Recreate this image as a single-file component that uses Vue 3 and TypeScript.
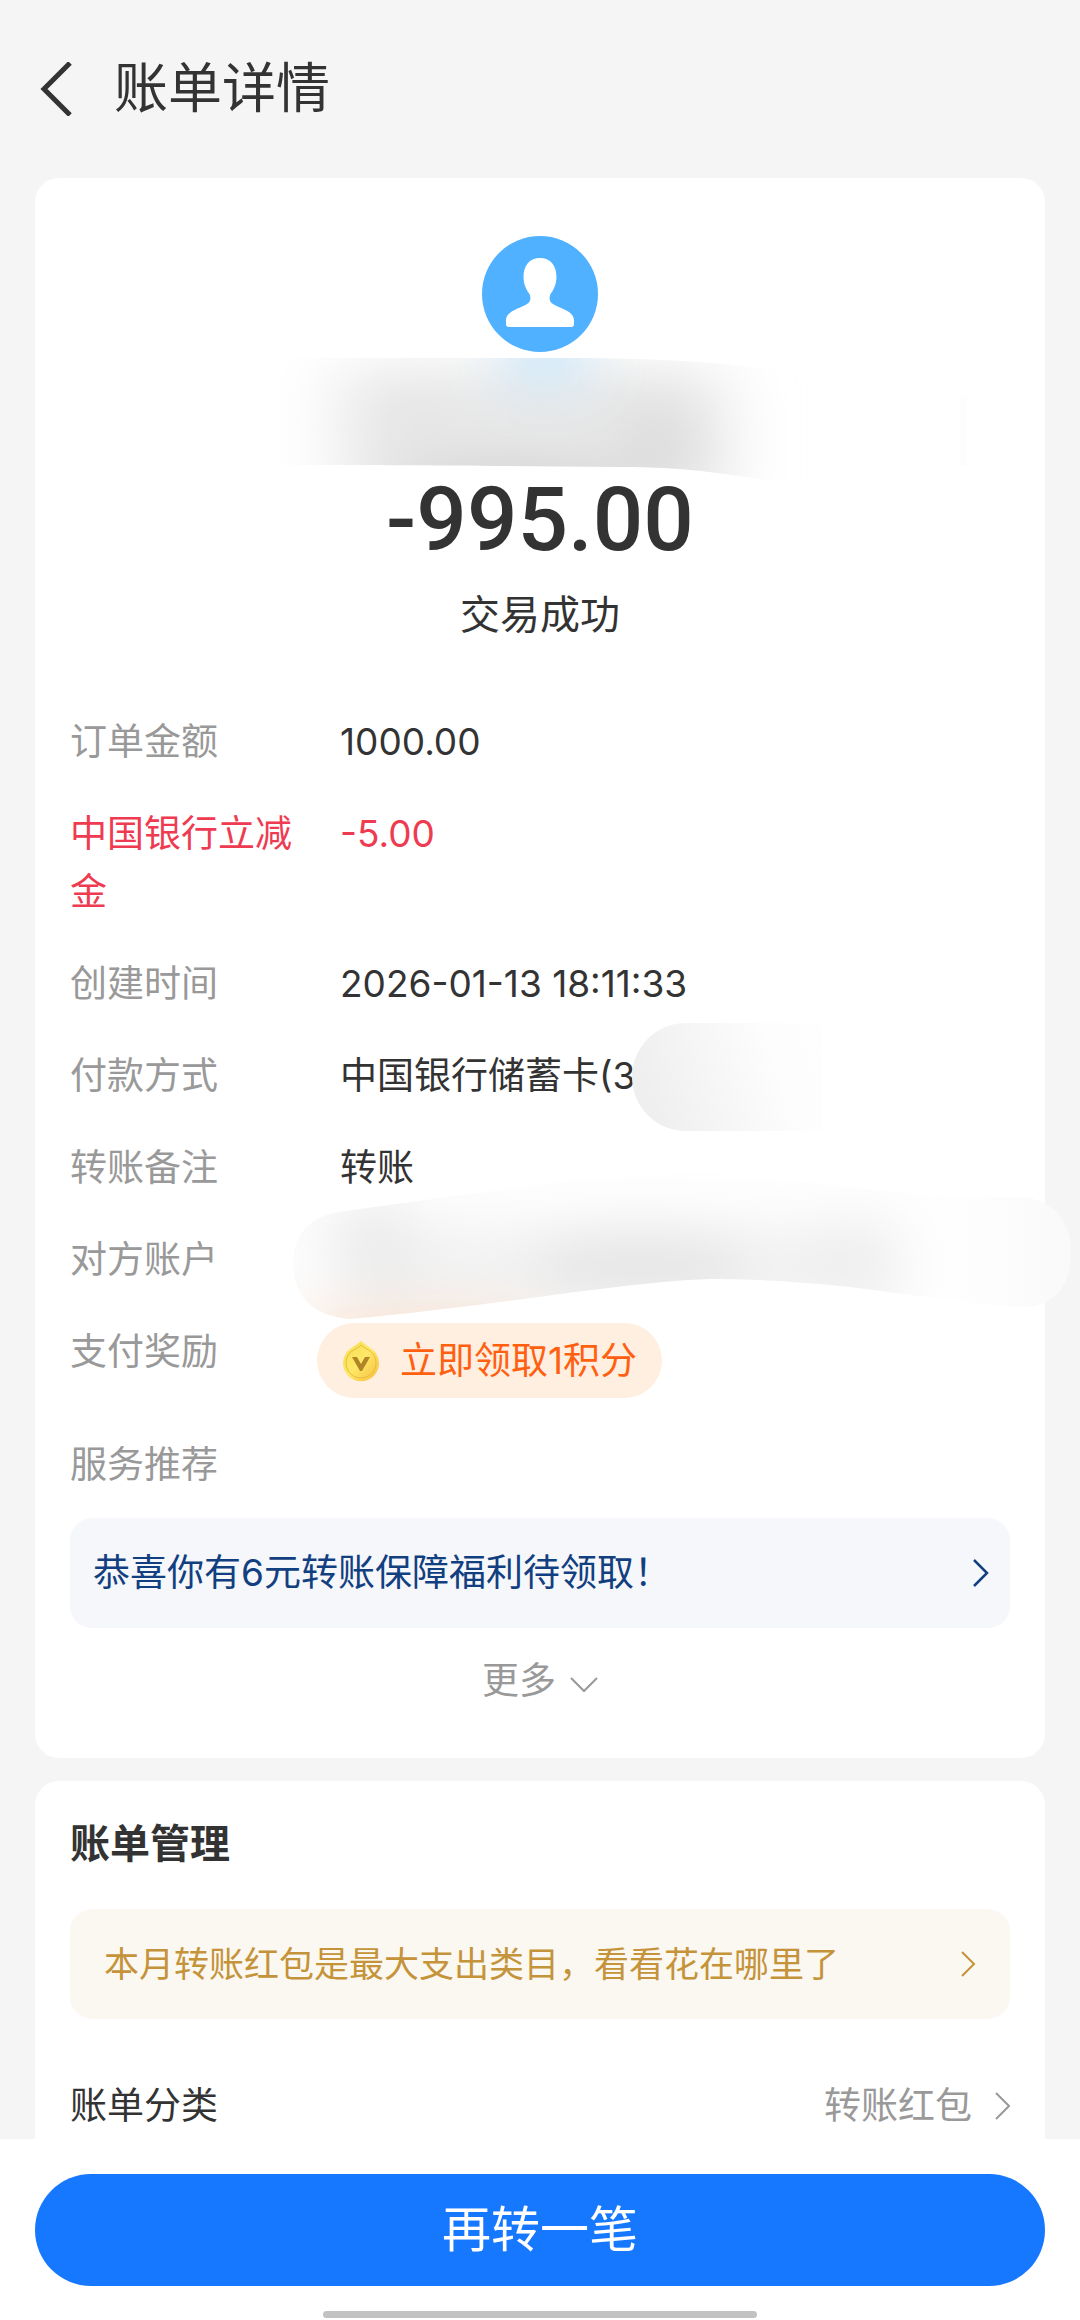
<script setup lang="ts">
interface DetailRow {
  label: string
  value: string
  highlight?: boolean
}

const details: DetailRow[] = [
  { label: '订单金额', value: '1000.00' },
  { label: '中国银行立减金', value: '-5.00', highlight: true },
  { label: '创建时间', value: '2026-01-13 18:11:33' },
  { label: '付款方式', value: '中国银行储蓄卡(3' },
  { label: '转账备注', value: '转账' },
  { label: '对方账户', value: '' },
]
</script>

<template>
  <div class="page">
    <header class="topbar">
      <button class="back" type="button" aria-label="返回">
        <svg width="32" height="54" viewBox="0 0 32 54" fill="none" stroke="#333" stroke-width="5">
          <path d="M30 1 4 27 30 53" />
        </svg>
      </button>
      <h1 class="title">账单详情</h1>
    </header>

    <main class="content">
      <section class="card summary">
        <svg class="avatar" width="116" height="116" viewBox="0 0 116 116" aria-hidden="true">
          <circle cx="58" cy="58" r="58" fill="#4fb1ff" />
          <path
            fill="#fff"
            d="M58 22C68 22 74.5 29 74.5 41C74.5 48 71.5 54 68.5 58C66.5 63 68 66 71 68C77 72 92 75 92 84V88Q92 91 89 91H27Q24 91 24 88V84C24 75 39 72 45 68C48 66 49.5 63 47.5 58C44.5 54 41.5 48 41.5 41C41.5 29 48 22 58 22Z"
          />
        </svg>
        <p class="amount">-995.00</p>
        <p class="status">交易成功</p>

        <dl class="details">
          <div v-for="row in details" :key="row.label" class="row" :class="{ highlight: row.highlight }">
            <dt>{{ row.label }}</dt>
            <dd>{{ row.value }}</dd>
          </div>
          <div class="row">
            <dt>支付奖励</dt>
            <dd>
              <button class="reward" type="button">
                <svg width="38" height="42" viewBox="0 0 38 42" aria-hidden="true">
                  <defs>
                    <linearGradient id="coin" x1="0" y1="0" x2="1" y2="1">
                      <stop offset="0" stop-color="#f3de4e" />
                      <stop offset="0.5" stop-color="#ffe768" />
                      <stop offset="1" stop-color="#f5bd3c" />
                    </linearGradient>
                  </defs>
                  <path d="M19 1C22 4 26 6 30 9A18 18 0 1 1 8 9C12 6 16 4 19 1Z" fill="url(#coin)" />
                  <path d="M19 5C22 8 25 9 28 11A15 15 0 1 1 10 11C13 9 16 8 19 5Z" fill="none" stroke="#e6bd3a" stroke-width="1" />
                  <path d="M10 17H15L19 24 23 17H28L20 31H18Z" fill="#b08428" />
                </svg>
                <span>立即领取1积分</span>
              </button>
            </dd>
          </div>
        </dl>

        <p class="service">服务推荐</p>
        <a class="banner blue" href="#">
          <span>恭喜你有6元转账保障福利待领取！</span>
          <svg width="18" height="28" viewBox="0 0 18 28" fill="none" stroke="currentColor" stroke-width="2.5">
            <path d="M2 1 15 14 2 27" />
          </svg>
        </a>
        <button class="more" type="button">
          更多
          <svg width="28" height="18" viewBox="0 0 28 18" fill="none" stroke="currentColor" stroke-width="2">
            <path d="M1 2 14 15 27 2" />
          </svg>
        </button>

        <!-- Redaction strokes over the payee name, card number and account -->
        <svg class="smudges" viewBox="0 178 1080 1200" aria-hidden="true">
          <defs>
            <filter id="soft" x="-50%" y="-100%" width="200%" height="300%">
              <feGaussianBlur stdDeviation="26" />
            </filter>
            <filter id="wide" x="-50%" y="-100%" width="200%" height="300%">
              <feGaussianBlur stdDeviation="38 26" />
            </filter>
            <linearGradient id="cardFade" x1="0" y1="0.2" x2="1" y2="0">
              <stop offset="0" stop-color="#efefef" />
              <stop offset="0.35" stop-color="#f6f6f6" />
              <stop offset="0.7" stop-color="#fdfdfd" />
              <stop offset="1" stop-color="#fefefe" />
            </linearGradient>
            <linearGradient id="accountBase">
              <stop offset="0" stop-color="#fcfcfc" />
              <stop offset="0.3" stop-color="#fefefe" />
              <stop offset="0.85" stop-color="#fefefe" />
              <stop offset="1" stop-color="#f9f9f9" />
            </linearGradient>
            <clipPath id="nameStroke">
              <path d="M270 358H560C660 358 720 362 780 371C850 380 900 384 967 390V480C900 486 850 488 790 483C730 476 700 467 620 467C500 466 400 465 270 465Z" />
            </clipPath>
            <clipPath id="accountStroke">
              <path d="M345 1211C460 1196 580 1175 700 1173C820 1178 900 1200 1025 1197Q1071 1206 1071 1252Q1071 1300 1030 1307C930 1304 870 1281 720 1279C640 1279 520 1303 350 1319Q295 1314 293 1265Q293 1217 345 1211Z" />
            </clipPath>
          </defs>

          <g clip-path="url(#nameStroke)">
            <rect x="270" y="350" width="700" height="150" fill="#fff" />
            <g filter="url(#wide)">
              <rect x="342" y="366" width="376" height="150" fill="#e8e8e8" />
              <ellipse cx="395" cy="420" rx="40" ry="24" fill="#e3e3e3" />
              <ellipse cx="510" cy="490" rx="120" ry="26" fill="#d0d0d0" />
              <ellipse cx="670" cy="445" rx="40" ry="50" fill="#d9d9d9" />
            </g>
            <ellipse cx="545" cy="356" rx="50" ry="32" fill="#c4e4fa" opacity="0.8" filter="url(#soft)" />
            <rect x="960" y="396" width="7" height="70" fill="#fdfdfd" />
          </g>

          <path d="M822 1023H686A54 54 0 0 0 686 1131H822Z" fill="url(#cardFade)" />

          <g clip-path="url(#accountStroke)">
            <rect x="290" y="1165" width="790" height="160" fill="url(#accountBase)" />
            <g filter="url(#soft)">
              <rect x="340" y="1225" width="560" height="90" fill="#f2f2f2" />
              <ellipse cx="375" cy="1245" rx="46" ry="46" fill="#ececec" />
              <ellipse cx="640" cy="1265" rx="110" ry="36" fill="#e6e6e6" />
              <ellipse cx="850" cy="1255" rx="50" ry="36" fill="#eeeeee" />
              <ellipse cx="420" cy="1335" rx="140" ry="20" fill="#ffdfc6" />
            </g>
          </g>
        </svg>
      </section>

      <section class="card manage">
        <h2 class="subtitle">账单管理</h2>
        <a class="banner gold" href="#">
          <span>本月转账红包是最大支出类目，看看花在哪里了</span>
          <svg width="18" height="28" viewBox="0 0 18 28" fill="none" stroke="currentColor" stroke-width="2">
            <path d="M2 2 14 14 2 26" />
          </svg>
        </a>
        <a class="category" href="#">
          <span>账单分类</span>
          <span class="category-value">
            转账红包
            <svg width="18" height="28" viewBox="0 0 18 28" fill="none" stroke="currentColor" stroke-width="2">
              <path d="M4 1 17 14 4 27" />
            </svg>
          </span>
        </a>
      </section>
    </main>

    <footer class="footer">
      <button class="primary" type="button">再转一笔</button>
      <div class="home-indicator"></div>
    </footer>
  </div>
</template>

<style>
body {
  margin: 0;
  background: #f5f5f5;
}
</style>

<style scoped>
.page {
  display: flex;
  flex-direction: column;
  min-height: 100vh;
  color: #333;
  font-family: Inter, 'Noto Sans CJK SC', sans-serif;
  font-size: 37px;
  line-height: 58px;
}

h1,
h2,
p,
dl,
dd {
  margin: 0;
}

button {
  padding: 0;
  border: 0;
  background: none;
  color: inherit;
  font: inherit;
}

a {
  color: inherit;
  text-decoration: none;
}

svg {
  display: block;
  flex: none;
}

.topbar {
  display: flex;
  align-items: center;
  gap: 42px;
  height: 178px;
  padding: 0 40px;
}

.title {
  font-size: 54px;
  font-weight: 400;
  line-height: 80px;
}

.content {
  display: flex;
  flex-direction: column;
  gap: 23px;
  padding: 0 35px;
}

.card {
  border-radius: 24px;
  background: #fff;
  padding: 0 35px;
}

.summary {
  position: relative;
  display: flex;
  flex-direction: column;
  padding-top: 58px;
  padding-bottom: 48px;
}

.avatar {
  align-self: center;
}

.amount {
  margin-top: 112px;
  font-family: Roboto, 'Liberation Sans', sans-serif;
  font-size: 89px;
  font-weight: 500;
  line-height: 112px;
  text-align: center;
}

.status {
  margin-top: 10px;
  font-size: 40px;
  text-align: center;
}

.details {
  display: flex;
  flex-direction: column;
  gap: 34px;
  margin-top: 69px;
}

.row {
  display: flex;
  gap: 38px;
}

.row dt {
  flex: none;
  width: 232px;
  color: #999;
}

.row.highlight,
.row.highlight dt {
  color: #ef3b51;
}

.reward {
  display: flex;
  align-items: center;
  gap: 20px;
  height: 75px;
  margin: 0 0 4px -23px;
  padding: 0 25px;
  border-radius: 38px;
  background: #ffefe0;
  color: #ff6010;
}

.service {
  margin-top: 34px;
  color: #999;
}

.banner {
  display: flex;
  align-items: center;
  justify-content: space-between;
  height: 110px;
  border-radius: 22px;
}

.blue {
  margin-top: 24px;
  padding: 0 20px 0 23px;
  background: #f5f7fb;
  color: #123f80;
}

.more {
  display: flex;
  align-items: baseline;
  align-self: center;
  gap: 14px;
  margin-top: 24px;
  color: #999;
}

.manage {
  padding-top: 34px;
  padding-bottom: 4px;
  border-radius: 24px 24px 0 0;
}

.subtitle {
  font-size: 40px;
  font-weight: 700;
}

.gold {
  margin-top: 36px;
  padding: 0 32px 0 34px;
  background: #fbf8f1;
  color: #c4933a;
  font-size: 35px;
}

.category {
  display: flex;
  justify-content: space-between;
  margin-top: 58px;
}

.category-value {
  display: flex;
  align-items: center;
  gap: 20px;
  color: #999;
}

.smudges {
  position: absolute;
  top: 0;
  left: -35px;
  width: calc(100% + 70px);
  pointer-events: none;
}

.footer {
  display: flex;
  flex: 1;
  flex-direction: column;
  align-items: center;
  justify-content: space-between;
  box-sizing: border-box;
  padding: 35px 35px 2px;
  background: #fff;
}

.primary {
  width: 100%;
  height: 112px;
  border-radius: 56px;
  background: #1677ff;
  color: #fff;
  font-size: 49px;
}

.home-indicator {
  width: 43%;
  height: 7px;
  border-radius: 4px;
  background: #c2c2c2;
}
</style>
